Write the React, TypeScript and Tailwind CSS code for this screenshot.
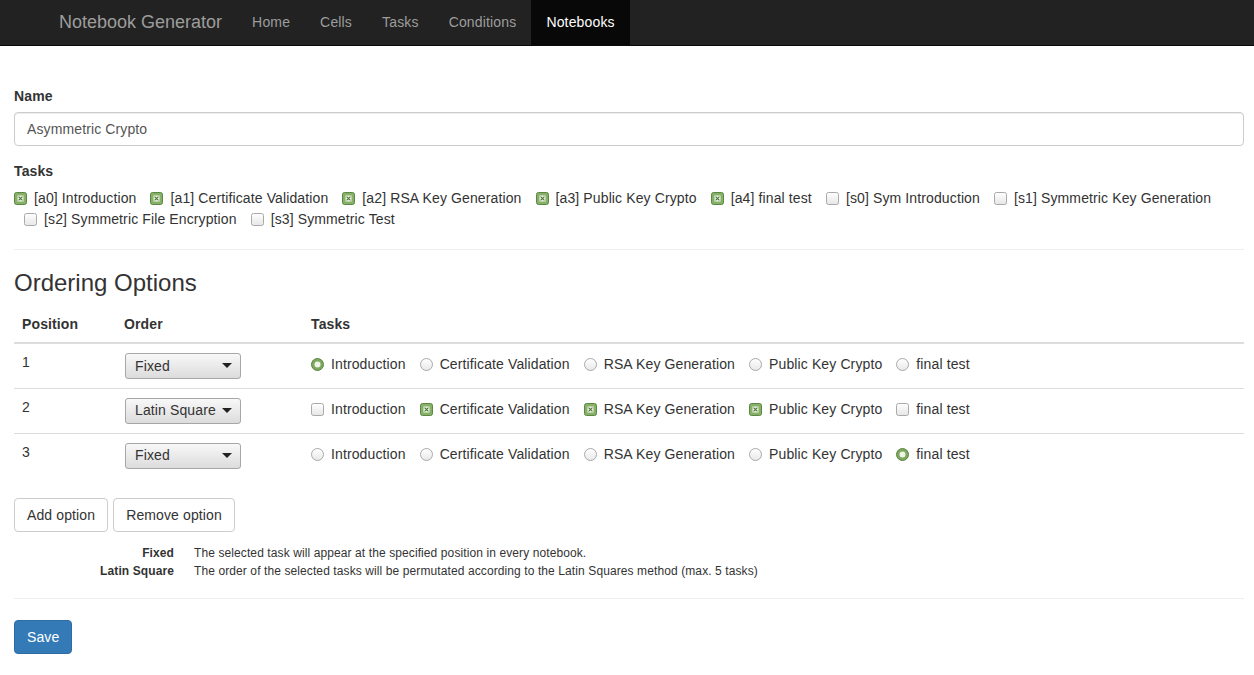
import React from 'react';

const font = { fontFamily: '"Liberation Sans", Arial, sans-serif' };

function CheckBox({ checked }: { checked: boolean }) {
  if (checked) {
    return (
      <svg width="13" height="13" viewBox="0 0 13 13" className="absolute left-0 top-[4px]">
        <rect x="0.5" y="0.5" width="12" height="12" rx="2" fill="#86b067" stroke="#5a8741" />
        <rect x="3.5" y="3.5" width="6" height="6" fill="#eef4e8" />
        <path d="M4.6 4.6 L8.4 8.4 M8.4 4.6 L4.6 8.4" stroke="#4a7533" strokeWidth="1.1" />
      </svg>
    );
  }
  return (
    <svg width="13" height="13" viewBox="0 0 13 13" className="absolute left-0 top-[4px]">
      <defs>
        <linearGradient id="cbg" x1="0" y1="0" x2="0" y2="1">
          <stop offset="0" stopColor="#ffffff" />
          <stop offset="1" stopColor="#e6e6e6" />
        </linearGradient>
      </defs>
      <rect x="0.5" y="0.5" width="12" height="12" rx="2" fill="url(#cbg)" stroke="#a9a9a9" />
    </svg>
  );
}

function Radio({ checked }: { checked: boolean }) {
  if (checked) {
    return (
      <svg width="13" height="13" viewBox="0 0 13 13" className="absolute left-0 top-[4px]">
        <circle cx="6.5" cy="6.5" r="6" fill="#7fa85f" stroke="#5a8540" />
        <circle cx="6.5" cy="6.5" r="3" fill="#eef4e8" />
      </svg>
    );
  }
  return (
    <svg width="13" height="13" viewBox="0 0 13 13" className="absolute left-0 top-[4px]">
      <defs>
        <linearGradient id="rbg" x1="0" y1="0" x2="0" y2="1">
          <stop offset="0" stopColor="#ffffff" />
          <stop offset="1" stopColor="#e8e8e8" />
        </linearGradient>
      </defs>
      <circle cx="6.5" cy="6.5" r="6" fill="url(#rbg)" stroke="#a9a9a9" />
    </svg>
  );
}

function Inline({ first, children, box }: { first?: boolean; children: React.ReactNode; box: React.ReactNode }) {
  return (
    <label className={`relative inline-block pl-5 ${first ? '' : 'ml-[10px]'}`}>
      {box}
      {children}
    </label>
  );
}

function Select({ value }: { value: string }) {
  return (
    <div className="flex h-[26px] w-[116px] items-center justify-between rounded-[3px] border border-[#a7a7a7] bg-gradient-to-b from-[#f8f8f8] to-[#dcdcdc] pl-[9px] pr-[8px] text-[14px] text-[#333]">
      <span>{value}</span>
      <svg width="10" height="6" viewBox="0 0 10 6">
        <path d="M0 0 L10 0 L5 5 Z" fill="#222" />
      </svg>
    </div>
  );
}

const allTasks = [
  { label: '[a0] Introduction', checked: true },
  { label: '[a1] Certificate Validation', checked: true },
  { label: '[a2] RSA Key Generation', checked: true },
  { label: '[a3] Public Key Crypto', checked: true },
  { label: '[a4] final test', checked: true },
  { label: '[s0] Sym Introduction', checked: false },
  { label: '[s1] Symmetric Key Generation', checked: false },
  { label: '[s2] Symmetric File Encryption', checked: false },
  { label: '[s3] Symmetric Test', checked: false },
];

const rowTasks = ['Introduction', 'Certificate Validation', 'RSA Key Generation', 'Public Key Crypto', 'final test'];

const options = [
  { pos: 1, order: 'Fixed', kind: 'radio', sel: [0] },
  { pos: 2, order: 'Latin Square', kind: 'check', sel: [1, 2, 3] },
  { pos: 3, order: 'Fixed', kind: 'radio', sel: [4] },
];

export default function App() {
  const nav = ['Home', 'Cells', 'Tasks', 'Conditions', 'Notebooks'];
  return (
    <div className="min-h-screen bg-white text-[14px] tracking-[0.12px] text-[#333]" style={font}>
      <div className="flex h-[46px] items-stretch border-b border-[#080808] bg-[#222]">
        <div className="ml-[44px] flex items-center px-[15px] text-[18px] tracking-normal text-[#9d9d9d]">Notebook Generator</div>
        {nav.map((n) => (
          <div
            key={n}
            className={`flex items-center px-[15px] tracking-[0.16px] ${n === 'Notebooks' ? 'bg-[#080808] text-white' : 'text-[#9d9d9d]'}`}
          >
            {n}
          </div>
        ))}
      </div>

      <div className="pl-[14px] pr-[10px] pt-[40px]">
        <div className="mb-[6px] font-bold leading-5">Name</div>
        <div className="flex h-[34px] items-center rounded-[4px] border border-[#ccc] px-3 text-[#555] shadow-[inset_0_1px_1px_rgba(0,0,0,0.075)]">
          Asymmetric Crypto
        </div>

        <div className="mt-[15px] font-bold leading-5">Tasks</div>
        <div className="mt-[7px] leading-[21px]">
          {allTasks.map((t, i) => (
            <React.Fragment key={t.label}>
              {i > 0 ? ' ' : ''}
              <Inline first={i === 0} box={<CheckBox checked={t.checked} />}>
                {t.label}
              </Inline>
            </React.Fragment>
          ))}
        </div>

        <hr className="mb-5 mt-[19px] border-t border-[#eee]" />

        <h3 className="mb-[10px] text-[24px] leading-[26px] font-medium tracking-normal">Ordering Options</h3>

        <table className="w-full border-collapse">
          <thead>
            <tr className="border-b-2 border-[#ddd]">
              <th className="w-[102px] p-2 text-left leading-5 font-bold">Position</th>
              <th className="w-[187px] p-2 text-left leading-5 font-bold">Order</th>
              <th className="p-2 text-left leading-5 font-bold">Tasks</th>
            </tr>
          </thead>
          <tbody>
            {options.map((o) => (
              <tr key={o.pos} className="border-t border-[#ddd]">
                <td className="h-[45px] p-2 align-top leading-5">{o.pos}</td>
                <td className="p-2 pl-[9px] align-top">
                  <div className="mt-px">
                    <Select value={o.order} />
                  </div>
                </td>
                <td className="p-2 align-top">
                  <div className="mt-[2px] leading-5">
                    {rowTasks.map((t, i) => (
                      <React.Fragment key={t}>
                        {i > 0 ? ' ' : ''}
                        <Inline
                          first={i === 0}
                          box={
                            o.kind === 'radio' ? (
                              <Radio checked={o.sel.includes(i)} />
                            ) : (
                              <CheckBox checked={o.sel.includes(i)} />
                            )
                          }
                        >
                          {t}
                        </Inline>
                      </React.Fragment>
                    ))}
                  </div>
                </td>
              </tr>
            ))}
          </tbody>
        </table>

        <div className="mt-5 flex gap-[5px]">
          <button className="h-[34px] rounded-[4px] border border-[#ccc] bg-white px-3 text-[#333]">Add option</button>
          <button className="h-[34px] rounded-[4px] border border-[#ccc] bg-white px-3 text-[#333]">Remove option</button>
        </div>

        <div className="mt-[12px] grid grid-cols-[160px_1fr] gap-x-5 text-[12px] leading-[18px] tracking-[0.1px]">
          <div className="text-right font-bold">Fixed</div>
          <div>The selected task will appear at the specified position in every notebook.</div>
          <div className="text-right font-bold">Latin Square</div>
          <div>The order of the selected tasks will be permutated according to the Latin Squares method (max. 5 tasks)</div>
        </div>

        <hr className="mb-[21px] mt-[18px] border-t border-[#eee]" />

        <button className="h-[34px] rounded-[4px] border border-[#2e6da4] bg-[#337ab7] px-3 text-white">Save</button>
      </div>
    </div>
  );
}
